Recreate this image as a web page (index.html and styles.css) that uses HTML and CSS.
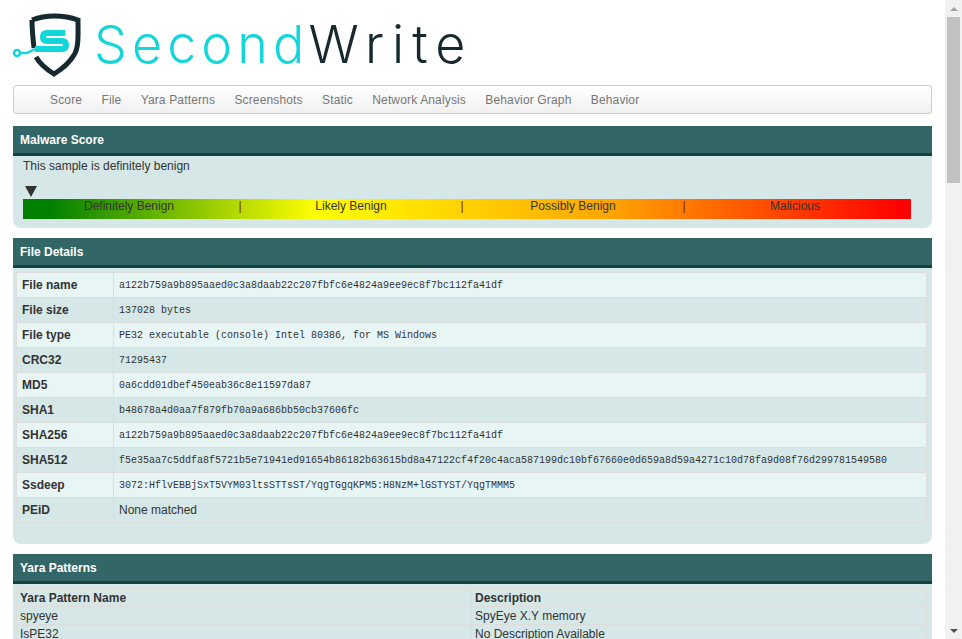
FILE: index.html
```html
<!DOCTYPE html>
<html lang="en">

<head>
    <meta charset="UTF-8">
    <title>SecondWrite - Malware Report</title>
    <link rel="stylesheet" href="styles.css">
</head>

<body>
    <div class="page">
        <div class="logo">
            <svg class="logo-mark" width="80" height="70" viewBox="0 0 80 70">
                <path class="shield" d="M19 7 C 27 4 33 3 41 3 C 50 3 57 4 65 7 C 65 22 66 34 61 42 C 57 49 49 56 41 61 C 33 56 27 51 23 44" />
                <path class="shield" d="M19 7 C 19 16 20 26 21 35" />
                <path class="swoosh" d="M52 20 H34 Q30 20 30 24 Q30 28 34 28 H49 Q53 28 53 32 Q53 36 49 36 H22" />
                <path class="wire" d="M6 40 H14 L22 36" />
                <circle class="node" cx="4" cy="40" r="3" />
            </svg>
            <div class="logo-text"><span class="logo-second">Second</span><span class="logo-write">Write</span></div>
        </div>

        <nav class="navbar">
            <a href="#score">Score</a>
            <a href="#file">File</a>
            <a href="#yara">Yara Patterns</a>
            <a href="#screenshots">Screenshots</a>
            <a href="#static">Static</a>
            <a href="#network">Network Analysis</a>
            <a href="#graph">Behavior Graph</a>
            <a href="#behavior">Behavior</a>
        </nav>

        <section class="panel" id="score">
            <h2 class="panel-title">Malware Score</h2>
            <div class="score-body">
                <p class="score-text">This sample is definitely benign</p>
                <div class="score-marker"></div>
                <div class="score-bar">
                    <span class="score-label">Definitely Benign</span>
                    <span class="score-sep">|</span>
                    <span class="score-label">Likely Benign</span>
                    <span class="score-sep">|</span>
                    <span class="score-label">Possibly Benign</span>
                    <span class="score-sep">|</span>
                    <span class="score-label">Malicious</span>
                </div>
            </div>
        </section>

        <section class="panel" id="file">
            <h2 class="panel-title">File Details</h2>
            <div class="file-body">
                <table class="details">
                    <tr><th>File name</th><td class="mono">a122b759a9b895aaed0c3a8daab22c207fbfc6e4824a9ee9ec8f7bc112fa41df</td></tr>
                    <tr><th>File size</th><td class="mono">137028 bytes</td></tr>
                    <tr><th>File type</th><td class="mono">PE32 executable (console) Intel 80386, for MS Windows</td></tr>
                    <tr><th>CRC32</th><td class="mono">71295437</td></tr>
                    <tr><th>MD5</th><td class="mono">0a6cdd01dbef450eab36c8e11597da87</td></tr>
                    <tr><th>SHA1</th><td class="mono">b48678a4d0aa7f879fb70a9a686bb50cb37606fc</td></tr>
                    <tr><th>SHA256</th><td class="mono">a122b759a9b895aaed0c3a8daab22c207fbfc6e4824a9ee9ec8f7bc112fa41df</td></tr>
                    <tr><th>SHA512</th><td class="mono">f5e35aa7c5ddfa8f5721b5e71941ed91654b86182b63615bd8a47122cf4f20c4aca587199dc10bf67660e0d659a8d59a4271c10d78fa9d08f76d299781549580</td></tr>
                    <tr><th>Ssdeep</th><td class="mono">3072:HflvEBBjSxT5VYM03ltsSTTsST/YqgTGgqKPM5:H8NzM+lGSTYST/YqgTMMM5</td></tr>
                    <tr><th>PEiD</th><td>None matched</td></tr>
                </table>
            </div>
        </section>

        <section class="panel" id="yara">
            <h2 class="panel-title">Yara Patterns</h2>
            <div class="yara-body">
                <table class="patterns">
                    <tr><th>Yara Pattern Name</th><th>Description</th></tr>
                    <tr><td>spyeye</td><td>SpyEye X.Y memory</td></tr>
                    <tr><td>IsPE32</td><td>No Description Available</td></tr>
                </table>
            </div>
        </section>
    </div>

    <div class="scrollbar">
        <div class="scroll-btn"><span class="arrow-up"></span></div>
        <div class="scroll-track"><div class="scroll-thumb"></div></div>
        <div class="scroll-btn"><span class="arrow-down"></span></div>
    </div>
</body>

</html>
```
FILE: styles.css
```css
html,
body {
    margin: 0;
    padding: 0;
    height: 100%;
    overflow: hidden;
}

body {
    display: flex;
    font-family: 'Liberation Sans', Arial, sans-serif;
    font-size: 12px;
    color: #333333;
    background: #ffffff;
}

.page {
    flex: 1;
    min-width: 0;
    height: 100%;
    overflow: hidden;
    padding: 0 13px;
}

/* logo */
.logo {
    display: flex;
    align-items: flex-start;
    height: 85px;
}

.logo-mark {
    margin-top: 13px;
    flex: none;
}

.logo-mark path {
    fill: none;
}

.shield {
    stroke: #16292f;
    stroke-width: 5;
}

.swoosh {
    stroke: #12d6d9;
    stroke-width: 6;
}

.wire {
    stroke: #12d6d9;
    stroke-width: 2.5;
}

.node {
    fill: #ffffff;
    stroke: #12d6d9;
    stroke-width: 2.5;
}

.logo-text {
    margin-left: 1px;
    margin-top: 12px;
    font-family: Inter, sans-serif;
    font-weight: 300;
    font-size: 52px;
    line-height: 66px;
    white-space: nowrap;
}

.logo-second {
    color: #12d6d9;
    letter-spacing: 5.1px;
}

.logo-write {
    color: #16292f;
    letter-spacing: 8px;
    margin-left: -1px;
}

/* navbar */
.navbar {
    display: flex;
    gap: 19.3px;
    height: 27px;
    padding-left: 36px;
    align-items: center;
    border: 1px solid #cccccc;
    border-radius: 3px;
    background: linear-gradient(to bottom, #ffffff, #f0f0f0);
    margin-bottom: 12px;
}

.navbar a {
    color: #777777;
    text-decoration: none;
    letter-spacing: 0.15px;
}

/* panels */
.panel {
    margin-bottom: 10px;
    background: #d5e7e7;
    border-radius: 0 0 8px 8px;
}

.panel-title {
    margin: 0;
    height: 27px;
    padding-left: 7px;
    line-height: 29px;
    font-size: 12px;
    font-weight: bold;
    color: #ffffff;
    background: #336666;
    border-bottom: 3px solid #174040;
}

.score-body {
    padding: 3px 21px 9px 10px;
}

.score-text {
    margin: 0;
    line-height: 14px;
}

.score-marker {
    width: 0;
    height: 0;
    margin: 13px 0 2px 2px;
    border-left: 6px solid transparent;
    border-right: 6px solid transparent;
    border-top: 11px solid #333333;
}

.score-bar {
    display: flex;
    height: 20px;
    padding-right: 10px;
    line-height: 14px;
    background: linear-gradient(to right, #008000 3%, #ffff00 33%, #ffa500 66%, #ff0000 99%);
}

.score-label {
    flex: 1;
    text-align: center;
}

.score-sep {
    width: 10px;
    text-align: center;
    color: #7a1f1f;
}

.file-body {
    padding: 4px 5px 21px 3px;
}

.yara-body {
    padding: 4px 5px 10px 3px;
}

table {
    width: 100%;
    border-collapse: collapse;
    table-layout: fixed;
}

th,
td {
    text-align: left;
    border: 1px solid #dddddd;
}

.details tr {
    height: 25px;
}

.details tr:nth-child(odd) {
    background: #e8f5f5;
}

.details th {
    width: 91px;
    padding: 0 0 0 5px;
}

.details td {
    padding: 0 0 0 5px;
}

.mono {
    font-family: 'Liberation Mono', 'Courier New', monospace;
    font-size: 10px;
}

.patterns tr {
    height: 18px;
}

.patterns th,
.patterns td {
    padding: 0 0 0 3px;
}

/* scrollbar */
.scrollbar {
    flex: none;
    width: 17px;
    height: 100%;
    display: flex;
    flex-direction: column;
    background: #f1f1f1;
}

.scroll-btn {
    flex: none;
    height: 17px;
    display: flex;
    align-items: center;
    justify-content: center;
}

.arrow-up,
.arrow-down {
    width: 0;
    height: 0;
    border-left: 4px solid transparent;
    border-right: 4px solid transparent;
}

.arrow-up {
    border-bottom: 4px solid #a3a3a3;
}

.arrow-down {
    border-top: 4px solid #505050;
}

.scroll-track {
    flex: 1;
    padding: 0 2px;
}

.scroll-thumb {
    height: 166px;
    background: #c1c1c1;
}
```
